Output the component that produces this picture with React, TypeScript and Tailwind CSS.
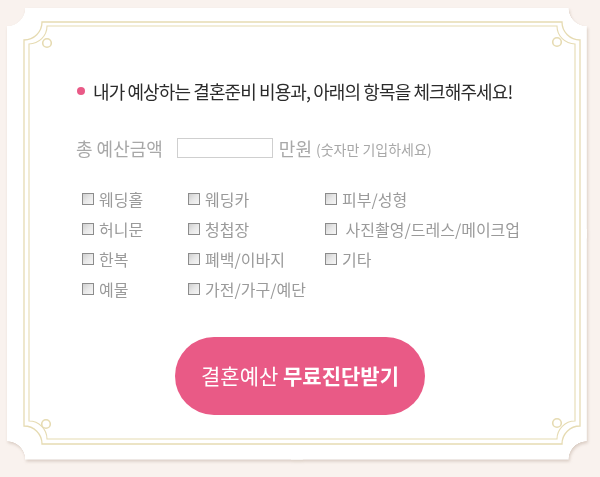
import React from 'react';

const items = [
  ['웨딩홀', '웨딩카', '피부/성형'],
  ['허니문', '청첩장', ' 사진촬영/드레스/메이크업'],
  ['한복', '폐백/이바지', '기타'],
  ['예물', '가전/가구/예단', ''],
];

// rectangle with concave (scooped) corners
function framePath(x0: number, y0: number, x1: number, y1: number, r: number) {
  return `M${x0 + r},${y0} H${x1 - r} A${r},${r} 0 0 0 ${x1},${y0 + r} V${y1 - r} A${r},${r} 0 0 0 ${x1 - r},${y1} H${x0 + r} A${r},${r} 0 0 0 ${x0},${y1 - r} V${y0 + r} A${r},${r} 0 0 0 ${x0 + r},${y0} Z`;
}

function Frame() {
  const gold = '#e6dbb2';
  return (
    <svg className="absolute inset-0 pointer-events-none" width="580" height="452" viewBox="0 0 580 452">
      <path d={framePath(17, 14, 573, 436, 18)} fill="none" stroke={gold} strokeWidth="1.3" />
      <path d={framePath(22, 18, 568, 431, 18)} fill="none" stroke={gold} strokeWidth="1.1" />
      <circle cx="40" cy="35" r="4.3" fill="none" stroke={gold} strokeWidth="1.6" />
      <circle cx="550" cy="34" r="4.3" fill="none" stroke={gold} strokeWidth="1.6" />
      <circle cx="39" cy="416" r="4.3" fill="none" stroke={gold} strokeWidth="1.6" />
      <circle cx="550" cy="415" r="4.3" fill="none" stroke={gold} strokeWidth="1.6" />
    </svg>
  );
}

function Check({ label }: { label: string }) {
  if (!label) return <div />;
  return (
    <label className="flex items-center gap-[5px] h-[30px] whitespace-pre">
      <span className="w-[12px] h-[12px] border border-[#8c8c8c] bg-gradient-to-br from-[#cfcfcf] via-[#e8e8e8] to-[#f5f5f5]" />
      <span className="text-[16px] text-[#9a9a9a]">{label}</span>
    </label>
  );
}

export default function App() {
  return (
    <div
      className="w-[600px] h-[477px] bg-[#f9f2ee] pt-[8px] pl-[7px] overflow-hidden"
      style={{ fontFamily: '"Noto Sans CJK KR", "Noto Sans", sans-serif' }}
    >
      <div className="w-[580px] h-[452px] drop-shadow-[1px_2px_1.5px_rgba(140,110,90,0.28)]">
        <div className="relative w-[580px] h-[452px] bg-white [mask:radial-gradient(circle_at_0_0,transparent_18px,#000_18.5px)_0_0/51%_51%_no-repeat,radial-gradient(circle_at_100%_0,transparent_18px,#000_18.5px)_100%_0/51%_51%_no-repeat,radial-gradient(circle_at_0_100%,transparent_18px,#000_18.5px)_0_100%/51%_51%_no-repeat,radial-gradient(circle_at_100%_100%,transparent_18px,#000_18.5px)_100%_100%/51%_51%_no-repeat]">
          <Frame />

          {/* title */}
          <div className="flex items-center gap-[8px] pt-[72px] pl-[70px] h-[94px]">
            <span className="w-[8px] h-[8px] rounded-full bg-[#e95a87]" />
            <p className="text-[18px] leading-[22px] tracking-[-0.9px] text-[#2b2b2b]">
              내가 예상하는 결혼준비 비용과, 아래의 항목을 체크해주세요!
            </p>
          </div>

          {/* budget */}
          <div className="flex items-center mt-[34px] pl-[69px] h-[24px] text-[#a8a8a8]">
            <span className="text-[18px]">총 예산금액</span>
            <input type="text" className="ml-[14px] w-[96px] h-[20px] border border-[#cfcfcf] bg-white outline-none" />
            <span className="ml-[6px] text-[18px]">만원</span>
            <span className="ml-[4px] text-[14px] pt-[2px]">(숫자만 기입하세요)</span>
          </div>

          {/* checklist */}
          <div className="grid grid-cols-[106px_137px_200px] mt-[24px] pl-[75px]">
            {items.map((row) => row.map((label, i) => <Check key={row[0] + i} label={label} />))}
          </div>

          {/* button */}
          <div className="mt-[33px] pl-[168px]">
            <button className="w-[250px] h-[78px] rounded-full bg-[#e95a86] text-white text-[21px]">
              결혼예산 <b className="font-bold">무료진단받기</b>
            </button>
          </div>
        </div>
      </div>
    </div>
  );
}
